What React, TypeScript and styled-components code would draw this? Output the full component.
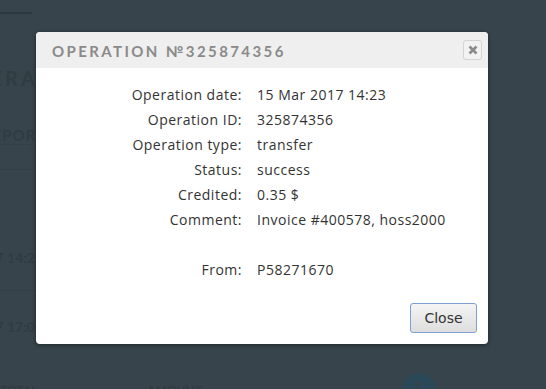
import styled, { createGlobalStyle } from 'styled-components';

const GlobalStyle = createGlobalStyle`
  html, body {
    margin: 0;
    padding: 0;
    width: 546px;
    height: 389px;
    overflow: hidden;
    background: #37444b;
  }
`;

const rows = [
  { label: 'Operation date:', value: '15 Mar 2017 14:23' },
  { label: 'Operation ID:', value: '325874356' },
  { label: 'Operation type:', value: 'transfer' },
  { label: 'Status:', value: 'success' },
  { label: 'Credited:', value: '0.35 $' },
  { label: 'Comment:', value: 'Invoice #400578, hoss2000' },
  { label: '', value: '' },
  { label: 'From:', value: 'P58271670' },
];

const App = () => {
  return (
    <>
      <GlobalStyle />
      <Page>
        <TopLine />
        <PageTitle>OPERATIONS</PageTitle>
        <TabLink>REPORT</TabLink>
        <Divider />
        <Cell gap={79}>15.03.2017 14:23</Cell>
        <Divider />
        <Cell gap={27}>15.03.2017 17:05</Cell>
        <BottomRow>
          <Faint>TOTAL</Faint>
          <Faint>AMOUNT</Faint>
          <Avatar>P</Avatar>
        </BottomRow>
      </Page>

      <Modal>
        <Header>
          <Title>OPERATION №325874356</Title>
          <CloseIcon aria-label="close">
            <svg width="10" height="10" viewBox="0 0 10 10">
              <path d="M1.5 1.5 L8.5 8.5 M8.5 1.5 L1.5 8.5" stroke="#8a8a8a" strokeWidth="2.6" />
            </svg>
          </CloseIcon>
        </Header>
        <Body>
          {rows.map((row, i) => (
            <Row key={i}>
              <Label>{row.label}</Label>
              <Value>{row.value}</Value>
            </Row>
          ))}
        </Body>
        <Footer>
          <CloseButton>Close</CloseButton>
        </Footer>
      </Modal>
    </>
  );
};

export default App;

const Page = styled.div`
  width: 546px;
  height: 389px;
  display: flex;
  flex-direction: column;
  font-family: 'Lato', 'Liberation Sans', sans-serif;
  color: #303c42;
  position: relative;
`;

const TopLine = styled.div`
  margin-top: 12px;
  width: 32px;
  height: 2px;
  background: #2e393f;
`;

const PageTitle = styled.div`
  margin-top: 52px;
  margin-left: -44px;
  font-size: 20px;
  font-weight: 700;
  letter-spacing: 3px;
`;

const TabLink = styled.div`
  margin-top: 36px;
  margin-left: -18px;
  font-size: 15px;
  font-weight: 700;
  letter-spacing: 1px;
  align-self: flex-start;
  border-bottom: 1px dotted #303c42;
`;

const Divider = styled.div`
  margin-top: 24px;
  width: 40px;
  height: 1px;
  background: #343f45;
`;

const Cell = styled.div<{ gap: number }>`
  margin-top: ${(p) => p.gap}px;
  margin-left: -68px;
  font-size: 14px;
  font-weight: 700;
`;

const BottomRow = styled.div`
  margin-top: auto;
  display: flex;
  align-items: flex-end;
  gap: 110px;
  height: 20px;
`;

const Faint = styled.div`
  font-size: 12px;
  font-weight: 700;
  margin-bottom: -8px;
`;

const Avatar = styled.div`
  width: 34px;
  height: 34px;
  border-radius: 50%;
  background: #2b4859;
  margin-left: 90px;
  margin-bottom: -18px;
  display: flex;
  justify-content: center;
  padding-top: 6px;
  box-sizing: border-box;
  color: #37444b;
  font-size: 13px;
  font-weight: 700;
`;

const Modal = styled.div`
  position: absolute;
  left: 36px;
  top: 32px;
  width: 452px;
  height: 312px;
  background: #fff;
  border-radius: 4px;
  box-shadow: 0 1px 4px rgba(0, 0, 0, 0.45);
  overflow: hidden;
  display: flex;
  flex-direction: column;
  font-family: 'Open Sans', 'Liberation Sans', sans-serif;
`;

const Header = styled.div`
  height: 36px;
  background: #efefef;
  display: flex;
  align-items: center;
  justify-content: space-between;
  padding: 0 6px 0 16px;
`;

const Title = styled.div`
  font-family: 'Lato', 'Liberation Sans', sans-serif;
  font-size: 15px;
  font-weight: 700;
  color: #8a8a8a;
  letter-spacing: 2.4px;
  margin-top: 1px;
`;

const CloseIcon = styled.button`
  width: 19px;
  height: 20px;
  padding: 0;
  border: 1px solid #d4d4d4;
  border-radius: 3px;
  background: #f2f2f2;
  display: flex;
  align-items: center;
  justify-content: center;
`;

const Body = styled.div`
  padding-top: 14px;
  display: flex;
  flex-direction: column;
`;

const Row = styled.div`
  display: grid;
  grid-template-columns: 206px 1fr;
  column-gap: 15px;
  height: 25px;
  line-height: 25px;
  font-size: 14px;
  letter-spacing: 0.5px;
  color: #333;
`;

const Label = styled.div`
  text-align: right;
`;

const Value = styled.div``;

const Footer = styled.div`
  margin-top: auto;
  display: flex;
  justify-content: flex-end;
  padding: 0 11px 11px 0;
`;

const CloseButton = styled.button`
  width: 67px;
  height: 30px;
  border: 1px solid #7d9fd3;
  border-radius: 3px;
  background: linear-gradient(#f4f4f4, #dedede);
  font-family: 'DejaVu Sans', 'Liberation Sans', sans-serif;
  font-size: 14px;
  color: #333;
  padding: 0;
`;
